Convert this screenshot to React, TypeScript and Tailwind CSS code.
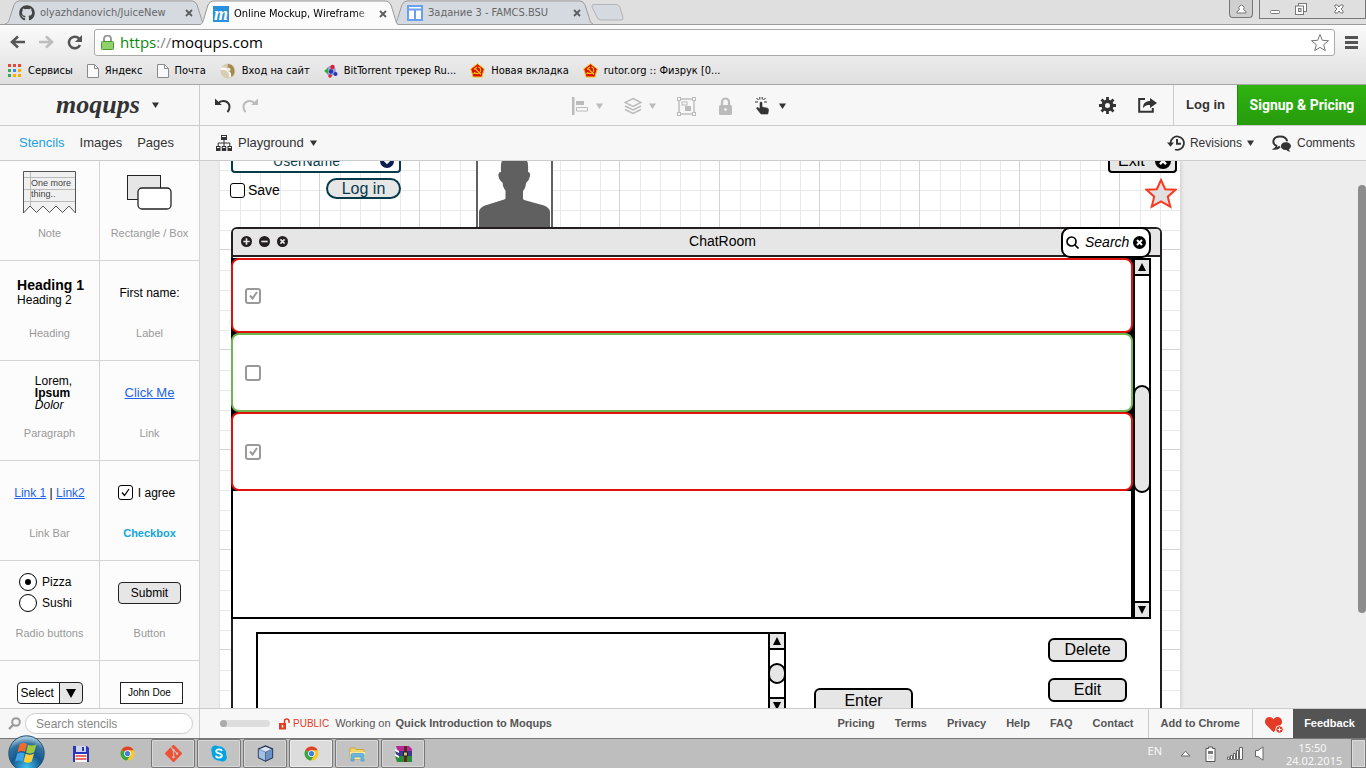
import React from "react";
import { FaGithub, FaLock, FaSkype, FaHeart } from "react-icons/fa";
import { SiGit } from "react-icons/si";

type Kids = { children?: React.ReactNode };

function Caret({ className = "text-[#333]" }: { className?: string }) {
  return (
    <svg width="7" height="6" viewBox="0 0 7 6" className={className} aria-hidden="true">
      <path d="M0 .5h7L3.500 6z" fill="currentColor" />
    </svg>
  );
}

/* ---------- Browser ---------- */

function CloseX() {
  return (
    <svg width="8" height="8" viewBox="0 0 8 8" aria-hidden="true">
      <path d="M1 1l6 6M7 1L1 7" stroke="#5c5c5c" strokeWidth="1.8" />
    </svg>
  );
}

function Tab({ icon, title, active = false }: { icon: React.ReactNode; title: string; active?: boolean }) {
  return (
    <div className={active ? "relative z-10 -mr-1.5 h-[25px] w-[200px]" : "relative -mr-1.5 h-6 w-[200px]"}>
      <svg className="absolute inset-0 h-full w-full" viewBox="0 0 200 25" preserveAspectRatio="none" aria-hidden="true">
        <path
          d="M0 25C4 24 4 21 5 18L9 5Q11 1 14 1H187Q190 1 192 5L196 18C197 21 197 24 200 25"
          fill={active ? "#fbfbfb" : "#d5dae1"}
          stroke="#999"
        />
      </svg>
      <div className="relative flex h-full items-center gap-[5px] pt-0.5 pr-2.5 pl-3.5">
        {icon}
        <span
          className={
            active
              ? "flex-1 overflow-hidden whitespace-nowrap text-[11px] leading-4 text-black [mask-image:linear-gradient(to_right,#000_88%,transparent)]"
              : "flex-1 overflow-hidden whitespace-nowrap text-[11px] leading-4 text-[#666]"
          }
        >
          {title}
        </span>
        <button aria-label={"Close " + title} className="p-0.5">
          <CloseX />
        </button>
      </div>
    </div>
  );
}

function PageIcon() {
  return (
    <svg width="12" height="14" viewBox="0 0 12 14" aria-hidden="true">
      <path d="M.5.5h7l4 4v9H.5z" fill="#fafafa" stroke="#8a8a8a" />
      <path d="M7.5.5v4h4" fill="none" stroke="#8a8a8a" />
    </svg>
  );
}

function SovietIcon() {
  return (
    <svg width="15" height="15" viewBox="0 0 15 15" aria-hidden="true">
      <path d="M7.5 .8L14.300 6 12.500 11.500 12 14H3L2.500 11.500.7 6z" fill="#d90f0f" stroke="#f5c400" strokeWidth="1" />
      <path d="M4 6.500l3-2.500M5 5.500l6 6M8.500 3.800c3 1.500 3 5.500.2 6.500-1.700.6-3.200.2-4.200-.8L3.500 11" fill="none" stroke="#ffc800" strokeWidth="1.100" />
    </svg>
  );
}

function Bookmark({ icon, children }: Kids & { icon: React.ReactNode }) {
  return (
    <a href="#" className="flex items-center gap-1.5 whitespace-nowrap text-[11px] leading-4 text-black">
      {icon}
      {children}
    </a>
  );
}

function AppsIcon() {
  const colors = ["#e8453c", "#e8453c", "#e8453c", "#3aa757", "#4285f4", "#f9ab00", "#3aa757", "#f9ab00", "#f9ab00"];
  return (
    <svg width="14" height="14" viewBox="0 0 14 14" aria-hidden="true">
      {colors.map((c, i) => (
        <rect key={i} x={(i % 3) * 5} y={Math.floor(i / 3) * 5} width="3" height="3" fill={c} />
      ))}
    </svg>
  );
}

function Browser() {
  return (
    <header className="shrink-0 border-b border-[#a6a6a6] bg-[#dfdfdf] font-['DejaVu_Sans_Condensed','Noto_Sans',sans-serif]">
      <div className="flex h-[25px] items-end border-b border-[#9a9a9a] pl-[5px]">
        <Tab icon={<FaGithub size={16} color="#444" />} title="olyazhdanovich/JuiceNew" />
        <div className="z-10 -mb-px">
          <Tab
            active
            icon={
              <span className="grid h-4 w-4 place-items-center bg-[#2b91dd] font-['Liberation_Serif',serif] text-[18px] leading-3 font-bold text-white italic">
                m
              </span>
            }
            title="Online Mockup, Wireframe"
          />
        </div>
        <Tab
          icon={
            <svg width="16" height="16" viewBox="0 0 16 16" aria-hidden="true">
              <path d="M1 1h14v14H1zM1 4.500h14M8 4v11" fill="#fff" stroke="#6b9ff0" strokeWidth="2" />
            </svg>
          }
          title="Задание 3 - FAMCS.BSU"
        />
        <button aria-label="New tab" className="mb-[3px] ml-1">
          <svg width="33" height="17" viewBox="0 0 33 17" aria-hidden="true">
            <path d="M3 .5h22q3 0 4 3l3 10q.5 2.500-2 2.500H10q-3 0-4-3L1 3Q.5.500 3 .5z" fill="#d5dae1" stroke="#b0b3b8" />
          </svg>
        </button>
        <div className="ml-auto flex self-start">
          <button aria-label="User" className="mr-1.5 grid h-[18px] w-6 place-items-center rounded-b border border-t-0 border-[#777] bg-[#cfcfcf]">
            <svg width="11" height="11" viewBox="0 0 11 11" aria-hidden="true">
              <path d="M1 10V8.500L3.500 6.500a2.600 2.600 0 1 1 4 0L10 8.500V10z" fill="#fff" stroke="#777" />
            </svg>
          </button>
          <div className="flex h-[19px] items-center border border-t-0 border-[#777]">
            <button aria-label="Minimize" className="grid h-full w-[30px] place-items-center">
              <svg width="10" height="10" viewBox="0 0 10 10" aria-hidden="true">
                <rect x=".5" y="6.500" width="9" height="3" rx="1" fill="#fff" stroke="#777" />
              </svg>
            </button>
            <button aria-label="Restore" className="grid h-full w-[22px] place-items-center">
              <svg width="12" height="12" viewBox="0 0 12 12" aria-hidden="true">
                <rect x="3.500" y=".5" width="8" height="8" fill="#fff" stroke="#777" />
                <rect x=".5" y="3" width="8" height="8.500" fill="#fff" stroke="#777" />
                <rect x="3.500" y="5.500" width="2.500" height="3" fill="#ddd" stroke="#777" />
              </svg>
            </button>
            <button aria-label="Close" className="grid h-full w-[53px] place-items-center">
              <svg width="10" height="10" viewBox="0 0 10 10" aria-hidden="true">
                <path d="M1 1h2.500L5 3l1.500-2H9v2L7 5l2 2v2H6.500L5 7 3.500 9H1V7l2-2-2-2z" fill="#fff" stroke="#777" />
              </svg>
            </button>
          </div>
        </div>
      </div>
      <div className="bg-linear-to-b from-[#fbfbfb] to-[#dfdfdf]">
        <div className="flex h-[34px] items-center gap-3 pr-2 pl-2.5">
          <div className="flex w-[72px] items-center justify-between">
            <button aria-label="Back">
              <svg width="15" height="14" viewBox="0 0 15 14" fill="none" stroke="#555" strokeWidth="2.600" aria-hidden="true">
                <path d="M15 7H2M8 1.500L2 7l6 5.500" />
              </svg>
            </button>
            <button aria-label="Forward">
              <svg width="15" height="14" viewBox="0 0 15 14" fill="none" stroke="#bdbdbd" strokeWidth="2.600" aria-hidden="true">
                <path d="M0 7h13M7 1.500L13 7l-6 5.500" />
              </svg>
            </button>
            <button aria-label="Reload">
              <svg width="15" height="15" viewBox="0 0 15 15" aria-hidden="true">
                <path d="M12 3.500A5.800 5.800 0 1 0 13 10" fill="none" stroke="#555" strokeWidth="2.600" />
                <path d="M15 0v7H8z" fill="#555" />
              </svg>
            </button>
          </div>
          <div className="flex h-[27px] flex-1 items-center gap-1.5 rounded-[3px] border border-[#aaa] bg-white pr-1 pl-1.5">
            <svg width="13" height="15" viewBox="0 0 13 15" aria-hidden="true">
              <path d="M3 7V4a3.500 3.500 0 0 1 7 0v3" fill="none" stroke="#999" strokeWidth="2" />
              <rect x=".5" y="6.500" width="12" height="8" rx="1" fill="#8fd16a" stroke="#4d9a2c" />
            </svg>
            <p className="flex-1 font-['Open_Sans','Noto_Sans',sans-serif] text-[15px] leading-5 text-black">
              <span className="text-[#0b8a0b]">https</span>
              <span className="text-[#888]">://</span>moqups.com
            </p>
            <button aria-label="Bookmark this page">
              <svg width="20" height="19" viewBox="0 0 20 19" aria-hidden="true">
                <path d="M10 1.500l2.300 5.800 6.200.4-4.800 4 1.600 6-5.300-3.300-5.300 3.300 1.600-6-4.800-4 6.200-.4z" fill="#fff" stroke="#777" />
              </svg>
            </button>
          </div>
          <button aria-label="Menu" className="-ml-0.5">
            <svg width="13" height="13" viewBox="0 0 13 13" aria-hidden="true">
              <path d="M0 1.500h13M0 6.500h13M0 11.500h13" stroke="#555" strokeWidth="3" />
            </svg>
          </button>
        </div>
        <nav className="flex h-[25px] items-center gap-3.5 pb-0.5 pl-2">
          <Bookmark icon={<AppsIcon />}>Сервисы</Bookmark>
          <Bookmark icon={<PageIcon />}>Яндекс</Bookmark>
          <Bookmark icon={<PageIcon />}>Почта</Bookmark>
          <Bookmark
            icon={
              <svg width="16" height="16" viewBox="0 0 16 16" aria-hidden="true">
                <circle cx="8" cy="8" r="7.500" fill="#d8cdb4" />
                <path d="M1 6a7 7 0 0 1 9 8" fill="none" stroke="#fff" strokeWidth="2" />
                <path d="M8 1a7 7 0 0 1 3 13c1-4-1-6-4-6z" fill="#a5884e" />
                <circle cx="8.500" cy="6.500" r="2" fill="#efe8d8" />
              </svg>
            }
          >
            Вход на сайт
          </Bookmark>
          <Bookmark
            icon={
              <svg width="14" height="14" viewBox="0 0 14 14" aria-hidden="true">
                <circle cx="7" cy="7" r="5" fill="#9ba6c8" />
                <circle cx="8.500" cy="3" r="2.200" fill="#e31e3c" />
                <path d="M0 7l4-3v6z" fill="#28b12c" />
                <circle cx="7" cy="7.500" r="2.200" fill="#2632c0" />
                <circle cx="11.500" cy="10" r="2" fill="#2632c0" />
                <circle cx="6" cy="12" r="1.800" fill="#e31e3c" />
              </svg>
            }
          >
            BitTorrent трекер Ru...
          </Bookmark>
          <Bookmark icon={<SovietIcon />}>Новая вкладка</Bookmark>
          <Bookmark icon={<SovietIcon />}>rutor.org :: Физрук [0...</Bookmark>
        </nav>
      </div>
    </header>
  );
}

/* ---------- Application bars ---------- */

function UndoArrow({ flip = false, color }: { flip?: boolean; color: string }) {
  return (
    <svg width="16" height="15" viewBox="0 0 16 15" className={flip ? "-scale-x-100" : ""} aria-hidden="true">
      <path d="M3 5.500C7 1 14.500 3 14.500 9q0 3-2 5.200" fill="none" stroke={color} strokeWidth="2" />
      <path d="M0 .5v6.500h6.800z" fill={color} />
    </svg>
  );
}

function Gear() {
  return (
    <svg width="17" height="17" viewBox="0 0 17 17" stroke="#333" fill="none" aria-hidden="true">
      <path d="M8.500 0v17M0 8.500h17M2.500 2.500l12 12M14.500 2.500l-12 12" strokeWidth="2.800" />
      <circle cx="8.500" cy="8.500" r="4.300" fill="#f7f7f7" strokeWidth="3.600" />
    </svg>
  );
}

function TopBar() {
  return (
    <div className="flex h-[41px] shrink-0 border-b border-[#ccc] bg-[#f7f7f7]">
      <div className="flex w-[200px] shrink-0 items-center justify-center gap-3 border-r border-[#ccc] pl-4">
        <span className="font-['Liberation_Serif',serif] text-[26px] leading-8 font-bold text-[#333] italic">moqups</span>
        <button aria-label="Moqups menu">
          <Caret />
        </button>
      </div>
      <div className="flex items-center gap-[11px] pl-[15px]">
        <button aria-label="Undo"><UndoArrow color="#333" /></button>
        <button aria-label="Redo"><UndoArrow flip color="#bbb" /></button>
      </div>
      <div className="flex flex-1 items-center justify-center gap-[21px] pt-0.5">
        <button aria-label="Align" className="flex items-center gap-[7px]">
          <svg width="17" height="18" viewBox="0 0 17 18" aria-hidden="true">
            <path d="M0 0h2.500v18H0zM4 4h8v4H4z" fill="#bbb" />
            <path d="M4.500 10.500h11v3.500h-11z" fill="none" stroke="#bbb" />
          </svg>
          <Caret className="text-[#bbb]" />
        </button>
        <button aria-label="Arrange" className="flex items-center gap-[7px]">
          <svg width="18" height="18" viewBox="0 0 18 18" fill="none" stroke="#bbb" strokeWidth="1.500" aria-hidden="true">
            <path d="M9 1.500l8 4-8 4-8-4zM1 9l8 4 8-4M1 12.500l8 4 8-4" />
          </svg>
          <Caret className="text-[#bbb]" />
        </button>
        <button aria-label="Group">
          <svg width="19" height="19" viewBox="0 0 19 19" aria-hidden="true">
            <rect x="2" y="2" width="15" height="15" fill="none" stroke="#bbb" strokeWidth="1.400" />
            <g fill="#f7f7f7" stroke="#bbb">
              <rect x=".5" y=".5" width="3" height="3" /><rect x="15.500" y=".5" width="3" height="3" />
              <rect x=".5" y="15.500" width="3" height="3" /><rect x="15.500" y="15.500" width="3" height="3" />
              <rect x="5" y="5" width="5" height="3" />
            </g>
            <rect x="8" y="9" width="6" height="5" fill="#bbb" />
          </svg>
        </button>
        <button aria-label="Lock">
          <svg width="17" height="18" viewBox="0 0 17 18" aria-hidden="true">
            <path d="M5 9V5a3.500 3.500 0 0 1 7 0v4" fill="none" stroke="#bbb" strokeWidth="2.200" />
            <rect x="2" y="8" width="13" height="10" rx="1.500" fill="#bbb" />
            <circle cx="8.500" cy="12.500" r="1.300" fill="#f7f7f7" />
          </svg>
        </button>
        <button aria-label="Interact" className="flex items-center gap-[9px]">
          <svg width="15" height="18" viewBox="0 0 15 18" aria-hidden="true">
            <path d="M5 5.500q1.200-1 2 0V10l5.500 1.200q1.200.4 1 2L12.800 17H6L2 12q-1-1.600.8-1.600L5 12z" fill="#333" stroke="#333" strokeWidth=".6" />
            <path d="M0 5h3M9 5h3M1.500 1l2 2M10.500 1l-2 2M4.800 0v2.500M7.200 0v2.500" stroke="#333" />
          </svg>
          <Caret />
        </button>
      </div>
      <div className="flex items-center gap-[22px] pr-4">
        <button aria-label="Settings"><Gear /></button>
        <button aria-label="Share">
          <svg width="19" height="16" viewBox="0 0 19 16" aria-hidden="true">
            <path d="M7 2H1.200v12.800h13.600V11" fill="none" stroke="#333" strokeWidth="2" />
            <path d="M5 11C5 6 8 4 12 4V1l7 5-7 5V8C9 8 7 8.500 5 11z" fill="#333" />
          </svg>
        </button>
      </div>
      <a href="#" className="flex items-center border-l border-[#ccc] px-3 text-[13px] font-bold text-[#333]">Log in</a>
      <a
        href="#"
        className="flex w-[129px] items-center justify-center border-l border-[#1e8a07] bg-linear-to-b from-[#2fb410] to-[#279b0c] font-['Roboto',sans-serif] text-[14px] font-bold whitespace-nowrap text-white"
      >
        Signup &amp; Pricing
      </a>
    </div>
  );
}

function SubBar() {
  return (
    <div className="flex h-[35px] shrink-0 border-b border-[#ccc] bg-[#f7f7f7] text-[13px] text-[#333]">
      <nav className="flex w-[200px] shrink-0 items-center gap-[15px] border-r border-[#ccc] pl-[19px]">
        <a href="#" className="text-[#1ba1e2]">Stencils</a>
        <a href="#">Images</a>
        <a href="#">Pages</a>
      </nav>
      <button className="flex items-center gap-1.5 pl-4">
        <svg width="16" height="16" viewBox="0 0 16 16" aria-hidden="true">
          <path d="M5 0h6v5H5zM0 11h4.500v5H0zM5.750 11h4.500v5h-4.500zM11.500 11H16v5h-4.500z" fill="#333" />
          <path d="M8 5v6M2.200 11V8h11.600v3" fill="none" stroke="#333" />
          <path d="M6 1.500h4M1 12.500h2.500M6.750 12.500h2.500M12.500 12.500H15" stroke="#f7f7f7" />
        </svg>
        <span>Playground</span>
        <Caret />
      </button>
      <div className="ml-auto flex items-center gap-[18px] pr-[11px] text-[12px]">
        <button className="flex items-center gap-[5px]">
          <svg width="18" height="16" viewBox="0 0 18 16" aria-hidden="true">
            <path d="M3.500 8A6.700 6.700 0 1 1 8 14.500" fill="none" stroke="#333" strokeWidth="1.800" />
            <path d="M0 7.500h7l-3.500 4.300z" fill="#333" />
            <path d="M10 4v4.800h4" fill="none" stroke="#333" strokeWidth="2" />
          </svg>
          <span>Revisions</span>
          <Caret />
        </button>
        <button className="flex items-center gap-1.5">
          <svg width="19" height="17" viewBox="0 0 19 17" aria-hidden="true">
            <path d="M8 11.500q-2 2.200-5 2.200 1.600-1 1.500-2.800C-.5 8.500.5 1.500 8 1.500c4 0 6.700 2 7.200 4.800" fill="none" stroke="#333" strokeWidth="2" />
            <path d="M13.700 7.200c6 0 6.500 5.200 3.300 7 0 1 .5 1.500 1.500 2.200-1.800 0-3-.5-4-1.500-7.500.5-7-7.700-.8-7.700z" fill="#333" />
          </svg>
          <span>Comments</span>
        </button>
      </div>
    </div>
  );
}

/* ---------- Sidebar ---------- */

function Stencil({ label, active = false, children }: Kids & { label?: string; active?: boolean }) {
  return (
    <li className="h-[100px] border-r border-b border-[#d4d4d4] text-[12px] text-black">
      <div className="flex h-[63px] items-center justify-center">{children}</div>
      {label && (
        <p className={active ? "text-center text-[11px] leading-[18px] font-bold text-[#12a5dc]" : "text-center text-[11px] leading-[18px] text-[#999]"}>
          {label}
        </p>
      )}
    </li>
  );
}

function Sidebar() {
  return (
    <aside className="w-[200px] shrink-0 overflow-hidden bg-[#fcfcfc]">
      <ul className="grid grid-cols-2">
        <Stencil label="Note">
          <div className="relative h-[43px] w-[53px]">
            <svg className="absolute inset-0" width="53" height="43" viewBox="0 0 53 43" aria-hidden="true">
              <path d="M.5 42V.5h52V42l-6.500-7-6.500 6.500-6.500-6.500-6.500 6.500-6.500-6.500-6.500 6.500-6.500-6.500z" fill="#f0f0f0" stroke="#555" />
              <path d="M1 6.500h51M1 18.500h51M1 30.500h51M7.500 1v34" stroke="#bbb" />
            </svg>
            <p className="relative pt-[7px] pl-2 text-[9px] leading-[11px] whitespace-nowrap text-[#444]">
              One more<br />thing..
            </p>
          </div>
        </Stencil>
        <Stencil label="Rectangle / Box">
          <svg width="45" height="35" viewBox="0 0 45 35" aria-hidden="true">
            <rect x=".5" y=".5" width="33" height="24" fill="#e6e6e6" stroke="#222" />
            <rect x="11" y="13" width="33" height="21" rx="4" fill="#fff" stroke="#222" strokeWidth="1.300" />
          </svg>
        </Stencil>
        <Stencil label="Heading">
          <div className="pl-0.5 leading-[15px]">
            <p className="text-[14px] font-bold">Heading 1</p>
            <p>Heading 2</p>
          </div>
        </Stencil>
        <Stencil label="Label">First name:</Stencil>
        <Stencil label="Paragraph">
          <p className="pl-2 leading-3">
            Lorem,<br /><b>Ipsum</b><br /><i>Dolor</i>
          </p>
        </Stencil>
        <Stencil label="Link">
          <a href="#" className="text-[13px] text-[#1c63ea] underline">Click Me</a>
        </Stencil>
        <Stencil label="Link Bar">
          <p className="whitespace-nowrap">
            <a href="#" className="text-[#1c63ea] underline">Link 1</a> | <a href="#" className="text-[#1c63ea] underline">Link2</a>
          </p>
        </Stencil>
        <Stencil label="Checkbox" active>
          <label className="flex items-center gap-[5px] pr-1.5">
            <CheckBox defaultChecked size="small" />I agree
          </label>
        </Stencil>
        <Stencil label="Radio buttons">
          <div className="flex flex-col gap-[3px] pr-2">
            <Radio defaultChecked>Pizza</Radio>
            <Radio>Sushi</Radio>
          </div>
        </Stencil>
        <Stencil label="Button">
          <button className="h-[22px] w-[63px] rounded border border-[#222] bg-[#e6e6e6] leading-5">Submit</button>
        </Stencil>
        <Stencil>
          <div className="relative h-[22px] w-[66px]">
            <select aria-label="Select" className="h-full w-full appearance-none rounded border border-[#222] bg-white bg-[linear-gradient(to_right,#222_1px,#e6e6e6_1px)] bg-[size:23px_100%] bg-right bg-no-repeat pl-[3px] text-[12px]">
              <option>Select</option>
            </select>
            <svg className="pointer-events-none absolute top-[7px] right-[7px]" width="10" height="9" viewBox="0 0 10 9" aria-hidden="true">
              <path d="M0 0h10L5 9z" />
            </svg>
          </div>
        </Stencil>
        <Stencil>
          <input aria-label="Name" defaultValue="John Doe" className="ml-1 h-[22px] w-[63px] border border-[#222] bg-white pl-[7px] text-[10px]" />
        </Stencil>
      </ul>
    </aside>
  );
}

function Radio({ children, defaultChecked }: Kids & { defaultChecked?: boolean }) {
  return (
    <label className="flex h-[18px] items-center gap-[5px]">
      <span className="grid h-[18px] w-[18px] place-items-center">
        <input type="radio" name="food" defaultChecked={defaultChecked} className="peer col-start-1 row-start-1 h-[18px] w-[18px] appearance-none rounded-full border border-black bg-white" />
        <span className="pointer-events-none col-start-1 row-start-1 hidden h-1.5 w-1.5 rounded-full bg-black peer-checked:block" />
      </span>
      {children}
    </label>
  );
}

function CheckBox({ size, defaultChecked, label }: { size: "small" | "grey"; defaultChecked?: boolean; label?: string }) {
  const grey = size === "grey";
  return (
    <span className="grid place-items-center">
      <input
        type="checkbox"
        aria-label={label}
        defaultChecked={defaultChecked}
        className={
          grey
            ? "peer col-start-1 row-start-1 h-4 w-4 appearance-none rounded-[3px] border-2 border-[#999] bg-white"
            : "peer col-start-1 row-start-1 h-[15px] w-[15px] appearance-none rounded-[3px] border border-black bg-white"
        }
      />
      <svg className="pointer-events-none col-start-1 row-start-1 hidden peer-checked:block" width="9" height="9" viewBox="0 0 9 9" aria-hidden="true">
        <path d="M1 4.500l2.500 3L8 1" fill="none" stroke={grey ? "#999" : "#000"} strokeWidth={grey ? 2 : 1.3} />
      </svg>
    </span>
  );
}

/* ---------- Canvas ---------- */

function Round({ size, kind, color = "#000", mark = "#fff" }: { size: number; kind: "plus" | "minus" | "x" | "down"; color?: string; mark?: string }) {
  const d = {
    plus: "M6 2.500v7M2.500 6h7",
    minus: "M2.500 6h7",
    x: "M3.700 3.700l4.600 4.600M8.300 3.700L3.700 8.300",
    down: "M3.500 5L6 7.500 8.500 5",
  }[kind];
  return (
    <svg width={size} height={size} viewBox="0 0 12 12" className="shrink-0" aria-hidden="true">
      <circle cx="6" cy="6" r="6" fill={color} />
      <path d={d} stroke={mark} strokeWidth="1.800" fill="none" />
    </svg>
  );
}

function Arrow({ up = false }: { up?: boolean }) {
  return (
    <button
      aria-label={up ? "Scroll up" : "Scroll down"}
      className={up ? "grid h-4 shrink-0 place-items-center border-b-2 border-black bg-[#e6e6e6]" : "grid h-4 shrink-0 place-items-center border-t-2 border-black bg-[#e6e6e6]"}
    >
      <svg width="8" height="8" viewBox="0 0 8 8" aria-hidden="true">
        <path d={up ? "M0 8h8L4 0z" : "M0 0h8L4 8z"} />
      </svg>
    </button>
  );
}

function CanvasPage() {
  return (
    <div
      className={
        "relative h-full w-[960px] shrink-0 bg-white shadow-[1px_0_4px_rgba(0,0,0,0.15)] bg-[size:100px_100px] bg-[position:0_-11px] " +
        "bg-[linear-gradient(to_right,transparent_99px,#d4d4d4_99px),linear-gradient(to_bottom,transparent_99px,#d4d4d4_99px),linear-gradient(to_right,transparent_20px,#e9e9e9_20px,#e9e9e9_21px,transparent_21px,transparent_40px,#e9e9e9_40px,#e9e9e9_41px,transparent_41px,transparent_60px,#e9e9e9_60px,#e9e9e9_61px,transparent_61px,transparent_80px,#e9e9e9_80px,#e9e9e9_81px,transparent_81px),linear-gradient(to_bottom,transparent_20px,#e9e9e9_20px,#e9e9e9_21px,transparent_21px,transparent_40px,#e9e9e9_40px,#e9e9e9_41px,transparent_41px,transparent_60px,#e9e9e9_60px,#e9e9e9_61px,transparent_61px,transparent_80px,#e9e9e9_80px,#e9e9e9_81px,transparent_81px)]"
      }
    >
      <div className="absolute top-[-12px] left-[11px] flex h-6 w-[170px] items-center justify-end rounded border-2 border-[#063b4b] bg-white pr-[5px]">
        <span className="flex-1 text-center text-[14px] text-[#063b4b]">UserName</span>
        <Round size={14} kind="down" color="#0a1f4f" />
      </div>
      <label className="absolute top-[19px] left-[10px] flex h-5 items-center gap-[3px] text-[14px] text-black">
        <CheckBox size="small" />Save
      </label>
      <button className="absolute top-[17px] left-[106px] h-[21px] w-[75px] rounded-full border-2 border-[#063b4b] bg-[#e6e6e6] text-[16px] leading-4 text-[#063b4b]">
        Log in
      </button>
      <svg className="absolute top-0 left-[256px]" width="77" height="67" viewBox="0 0 77 67" aria-hidden="true">
        <path d="M0 0h77v67H0z" fill="#606060" />
        <path d="M2 0h73v67H2z" fill="#fff" />
        <path d="M26 0q-1.500 2-1 11-3 0-2.500 4t4 6.500q.5 5.500 3 8v8q-1 1-3 1.500L9 44.500Q3 47 3 51v16h71V51q0-4-6-6.500L50 39.500q-2-.5-3-1.500v-8q2.500-2.500 3-8 3.500-3 4-7T52 11q.5-9-1-11z" fill="#606060" />
      </svg>
      <button className="absolute top-[-12px] left-[888px] flex h-6 w-[69px] items-center justify-between rounded border-2 border-black bg-[#e6e6e6] pr-1 pl-2 text-[16px] text-black">
        Exit <Round size={16} kind="x" />
      </button>
      <svg className="absolute top-[17px] left-[925px]" width="32" height="31" viewBox="0 0 32 31" aria-hidden="true">
        <path d="M16 2l4.200 9.200 10.300.5-7.700 7 2.500 10L16 23.500l-9.300 5.200 2.500-10-7.700-7 10.300-.5z" fill="#e0e0e0" stroke="#f63b22" strokeWidth="2" />
      </svg>

      <section className="absolute top-[66px] left-[11px] h-[520px] w-[931px] rounded-t-md border-2 border-[#231f20] bg-white text-black">
        <div className="flex h-7 items-center gap-[7px] rounded-t border-b-2 border-[#231f20] bg-[#e6e6e6] pb-0.5 pl-2">
          <Round size={11} kind="plus" color="#231f20" mark="#e6e6e6" />
          <Round size={11} kind="minus" color="#231f20" mark="#e6e6e6" />
          <Round size={11} kind="x" color="#231f20" mark="#e6e6e6" />
          <h1 className="flex-1 pr-2.5 text-center text-[14px]">ChatRoom</h1>
        </div>
      </section>

      <div className="absolute top-[97px] left-[11px] flex h-[361px] w-[920px]">
        <div className="flex-1 border-2 border-black">
          <ul className="-mx-0.5 -mt-0.5 bg-black">
            <li className="flex h-[75px] items-center rounded-lg border-2 border-[#e0120e] bg-white pl-3"><CheckBox size="grey" defaultChecked label="Message 1" /></li>
            <li className="flex h-[79px] items-center rounded-lg border-2 border-[#6fb554] bg-white pl-3"><CheckBox size="grey" label="Message 2" /></li>
            <li className="flex h-[79px] items-center rounded-lg border-2 border-[#e0120e] bg-white pl-3"><CheckBox size="grey" defaultChecked label="Message 3" /></li>
          </ul>
        </div>
        <div className="flex w-[18px] flex-col border-2 border-black bg-white">
          <Arrow up />
          <div className="flex-1 pt-[109px]">
            <div className="-mx-0.5 h-[108px] rounded-full border-2 border-black bg-[#e6e6e6]" />
          </div>
          <Arrow />
        </div>
      </div>

      <div className="absolute top-[66px] left-[841px] flex h-[31px] w-[90px] items-center gap-1 rounded-[9px] border-2 border-black bg-white px-[3px]">
        <svg width="13" height="13" viewBox="0 0 13 13" className="shrink-0" aria-hidden="true">
          <circle cx="5.500" cy="5.500" r="4.500" fill="none" stroke="#000" strokeWidth="1.700" />
          <path d="M9 9l3.500 3.500" stroke="#000" strokeWidth="1.700" />
        </svg>
        <input aria-label="Search" placeholder="Search" className="min-w-0 flex-1 bg-transparent pl-0.5 text-[14px] text-black italic outline-none placeholder:text-black" />
        <Round size={13} kind="x" />
      </div>

      <div className="absolute top-[471px] left-[36px] flex h-[83px] w-[530px] border-2 border-black bg-white">
        <textarea aria-label="Message" className="flex-1 resize-none outline-none" />
        <div className="flex w-4 flex-col border-l-2 border-black bg-white">
          <Arrow up />
          <div className="flex-1 pt-[13px]">
            <div className="-ml-0.5 h-[21px] w-[18px] rounded-full border-2 border-black bg-[#e6e6e6]" />
          </div>
          <Arrow />
        </div>
      </div>
      <button className="absolute top-[527px] left-[594px] h-[26px] w-[99px] rounded-md border-2 border-black bg-[#e6e6e6] text-[16px] leading-5 text-black">Enter</button>
      <button className="absolute top-[477px] left-[828px] h-6 w-[79px] rounded-md border-2 border-black bg-[#e6e6e6] text-[16px] leading-5 text-black">Delete</button>
      <button className="absolute top-[517px] left-[828px] h-6 w-[79px] rounded-md border-2 border-black bg-[#e6e6e6] text-[16px] leading-5 text-black">Edit</button>
    </div>
  );
}

/* ---------- Footer and taskbar ---------- */

function Footer() {
  return (
    <footer className="flex h-[30px] shrink-0 border-t border-[#ccc] bg-[#f7f7f7] text-[11px] text-[#555]">
      <label className="flex w-[200px] shrink-0 items-center gap-1 border-r border-[#ccc] pl-2">
        <svg width="13" height="13" viewBox="0 0 13 13" aria-label="Search stencils">
          <circle cx="8" cy="5" r="3.800" fill="none" stroke="#999" strokeWidth="2" />
          <path d="M5 8l-4 4" stroke="#999" strokeWidth="2.400" />
        </svg>
        <input placeholder="Search stencils" className="h-[21px] w-[168px] rounded-full border border-[#ccc] bg-white pl-2.5 text-[12px] outline-none placeholder:text-[#888]" />
      </label>
      <div className="flex flex-1 items-center pl-5">
        <input
          type="range"
          aria-label="Zoom"
          defaultValue={0}
          className="h-[7px] w-[50px] appearance-none rounded-full bg-[#ddd] [&::-webkit-slider-thumb]:h-[7px] [&::-webkit-slider-thumb]:w-[7px] [&::-webkit-slider-thumb]:appearance-none [&::-webkit-slider-thumb]:rounded-full [&::-webkit-slider-thumb]:bg-[#aaa]"
        />
        <svg className="ml-[9px]" width="11" height="12" viewBox="0 0 11 12" aria-hidden="true">
          <path d="M0 5h7v6.500H0z" fill="#e33b25" />
          <path d="M5.500 5V3q0-2 2.200-2T10 3v2" fill="none" stroke="#e33b25" strokeWidth="1.500" />
          <path d="M3.500 7v2.500" stroke="#fff" strokeWidth="1.500" />
        </svg>
        <span className="ml-[3px] text-[10px] text-[#e33b25]">PUBLIC</span>
        <span className="ml-1.5">Working on</span>
        <b className="ml-[5px]">Quick Introduction to Moqups</b>
      </div>
      <nav className="flex items-center gap-5 pr-3.5 font-bold">
        <a href="#">Pricing</a>
        <a href="#">Terms</a>
        <a href="#">Privacy</a>
        <a href="#">Help</a>
        <a href="#">FAQ</a>
        <a href="#">Contact</a>
      </nav>
      <a href="#" className="flex items-center border-l border-[#ccc] px-3 font-bold">Add to Chrome</a>
      <button aria-label="Like" className="flex w-[41px] items-center justify-center border-l border-[#ccc]">
        <span className="relative pt-0.5">
          <FaHeart size={17} color="#e33b25" />
          <svg className="absolute right-[-2px] bottom-[-1px]" width="9" height="9" viewBox="0 0 9 9" aria-hidden="true">
            <circle cx="4.500" cy="4.500" r="3.800" fill="#e33b25" stroke="#fff" />
            <path d="M4.500 2.500v4M2.500 4.500h4" stroke="#fff" />
          </svg>
        </span>
      </button>
      <button className="w-[73px] bg-[#545454] font-bold text-white">Feedback</button>
    </footer>
  );
}

function ChromeIcon({ size }: { size: number }) {
  return (
    <svg width={size} height={size} viewBox="0 0 16 16" aria-hidden="true">
      <circle cx="8" cy="8" r="7.500" fill="#fbc926" />
      <path d="M8 8L1.500 4.300A7.500 7.500 0 0 1 14.600 4.500H8z" fill="#e0402f" />
      <path d="M8 8L1.500 4.300A7.500 7.500 0 0 0 7.500 15.500L11 9.700z" fill="#3aa548" />
      <circle cx="8" cy="8" r="3.600" fill="#fff" />
      <circle cx="8" cy="8" r="2.800" fill="#3f7fd6" />
    </svg>
  );
}

function Task({ label, active = false, children }: Kids & { label: string; active?: boolean }) {
  return (
    <button
      aria-label={label}
      className={
        active
          ? "grid h-full w-11 place-items-center rounded-[2px] border border-[#777] bg-[#dcdcdc] shadow-[inset_0_0_0_1px_#eee]"
          : "grid h-full w-11 place-items-center rounded-[2px] border border-[#777] bg-[#c3c3c3] shadow-[inset_0_0_0_1px_#d8d8d8]"
      }
    >
      {children}
    </button>
  );
}

function Taskbar() {
  return (
    <div className="flex h-[30px] shrink-0 items-center border-t border-[#777] bg-[#bebebe] font-['Noto_Sans',sans-serif]">
      <button aria-label="Start" className="relative z-10 -my-1 ml-2">
        <svg width="37" height="37" viewBox="0 0 37 37" aria-hidden="true">
          <defs>
            <radialGradient id="orb" cx=".5" cy=".9" r=".85">
              <stop offset="0" stopColor="#3fc3ee" />
              <stop offset=".5" stopColor="#16588f" />
              <stop offset=".8" stopColor="#34739f" />
              <stop offset="1" stopColor="#a9c9dc" />
            </radialGradient>
          </defs>
          <circle cx="18.500" cy="18.500" r="17.700" fill="url(#orb)" stroke="#1d4f72" />
          <path d="M11.500 9.500q4-2.500 7.500-.5l-2 8q-3.500-2-7.500.5z" fill="#ef6a2d" />
          <path d="M20 9.700q4 2 8.500-.5l-2.300 8q-4.500 2.500-8.200.3z" fill="#9bcb3c" />
          <path d="M9.200 18.700q4-2.300 7.500-.4l-2 8q-4-2-7.700.4z" fill="#3fa4e6" />
          <path d="M17.700 18.800q4 2 8.300-.3l-2.300 8q-4.300 2.400-8-.1z" fill="#fccf37" />
        </svg>
      </button>
      <button aria-label="Total Commander" className="ml-7">
        <svg width="16" height="16" viewBox="0 0 16 16" aria-hidden="true">
          <path d="M0 0h14l2 2v14H0z" fill="#2838b8" />
          <path d="M3 0h10v6H3z" fill="#cfd4ef" /><path d="M9 1h2v4H9z" fill="#2838b8" />
          <path d="M2 8h12v8H2z" fill="#fff" /><path d="M2.500 10h11M2.500 13h11" stroke="#e23c3c" strokeWidth="1.500" />
        </svg>
      </button>
      <button aria-label="Chrome" className="ml-[31px]"><ChromeIcon size={15} /></button>
      <div className="ml-4 flex h-full gap-0.5">
        <Task label="Git"><SiGit size={17} color="#f05133" /></Task>
        <Task label="Skype">
          <svg width="18" height="17" viewBox="0 0 18 17" aria-hidden="true">
            <circle cx="9" cy="8.500" r="7.200" fill="#00a4e4" />
            <circle cx="5.500" cy="4.800" r="4.300" fill="#00a4e4" />
            <circle cx="12.500" cy="12.200" r="4.300" fill="#00a4e4" />
            <path d="M12 6Q11.500 4.300 9 4.300 6.200 4.300 6.200 6.300 6.200 7.800 9 8.400t2.900 2.200q0 2-2.900 2-2.600 0-3.100-1.900" fill="none" stroke="#fff" strokeWidth="1.800" />
          </svg>
        </Task>
        <Task label="VirtualBox">
          <svg width="17" height="17" viewBox="0 0 17 17" stroke="#1c2a4d" aria-hidden="true">
            <path d="M1.500 4L8.500 1l7 3v8.500l-7 3.500-7-3.500z" fill="#d7e4f4" strokeWidth="1.300" />
            <path d="M1.500 4l7 3v9l-7-3.500z" fill="#a3c0e4" strokeWidth=".4" />
            <path d="M15.500 4l-7 3v9l7-3.500z" fill="#6d92c6" strokeWidth=".4" />
          </svg>
        </Task>
        <Task label="Chrome window" active><ChromeIcon size={15} /></Task>
        <Task label="Explorer">
          <svg width="17" height="16" viewBox="0 0 17 16" aria-hidden="true">
            <path d="M1 2h5l1 1.500h8V13H1z" fill="#f2d56b" stroke="#cda93a" />
            <path d="M1 6h15v7H1z" fill="#fae9a0" />
            <path d="M2 15V9q0-1.500 1.500-1.500h10Q15 7.500 15 9v6h-3v-4H5v4z" fill="#67b7e2" stroke="#3f8fc0" strokeWidth=".6" />
          </svg>
        </Task>
        <Task label="WinRAR">
          <svg width="17" height="16" viewBox="0 0 17 16" aria-hidden="true">
            <path d="M1 0h13l3 3v3H3z" fill="#b5299b" /><path d="M0 5h17v5H2z" fill="#3d3a93" />
            <path d="M0 10h17v6H2z" fill="#2c8a3d" /><path d="M0 3l4 2v2L0 5zM0 8l4 2v2L0 10z" fill="#fff" />
            <path d="M9 0h3v16H9z" fill="#5a2a17" /><path d="M8.500 6h4v4h-4z" fill="#d9c27b" stroke="#222" />
          </svg>
        </Task>
      </div>
      <div className="ml-auto flex h-full items-center text-[#f8f8f8]">
        <span className="pb-1 text-[11px]">EN</span>
        <svg className="ml-[18px]" width="11" height="7" viewBox="0 0 11 7" aria-hidden="true">
          <path d="M1 6L5.500 1.200 10 6z" fill="#fff" stroke="#666" />
        </svg>
        <svg className="ml-3.5" width="11" height="16" viewBox="0 0 11 16" aria-hidden="true">
          <path d="M3.500 1h4v1.500h2.500v13H1v-13h2.500z" fill="#fff" stroke="#555" />
          <path d="M3 5h5v3H3z" fill="#777" /><path d="M3 9h5v4.500H3z" fill="#ddd" />
        </svg>
        <svg className="ml-[11px]" width="16" height="13" viewBox="0 0 16 13" fill="#fff" stroke="#666" aria-hidden="true">
          <path d="M.5 10h2v2.500h-2zM3.500 8.500h2v4h-2zM6.500 6.500h2v6h-2zM9.500 3.500h2v9h-2zM12.500.500h3v12h-3z" />
        </svg>
        <svg className="ml-3" width="9" height="15" viewBox="0 0 9 15" aria-hidden="true">
          <path d="M.5 4.500h2.500L8 .8v13.400L3 10.500H.5z" fill="#fff" stroke="#666" />
        </svg>
        <p className="ml-[22px] w-[53px] text-center text-[11px] leading-[13px] whitespace-nowrap">
          15:50<br />24.02.2015
        </p>
        <button aria-label="Show desktop" className="ml-3 h-full w-[15px] border border-[#777] bg-[#c6c6c6] shadow-[inset_0_0_0_1px_#ddd]" />
      </div>
    </div>
  );
}

export default function App() {
  return (
    <div className="flex h-screen flex-col overflow-hidden font-['Liberation_Sans',Arial,sans-serif]">
      <Browser />
      <TopBar />
      <SubBar />
      <div className="flex min-h-0 flex-1">
        <Sidebar />
        <main className="flex min-w-0 flex-1 justify-between overflow-hidden bg-[#ededed] pl-5">
          <CanvasPage />
          <div className="pt-6">
            <div className="h-[428px] w-2 rounded-full bg-[#8c8c8c]" />
          </div>
        </main>
      </div>
      <Footer />
      <Taskbar />
    </div>
  );
}
